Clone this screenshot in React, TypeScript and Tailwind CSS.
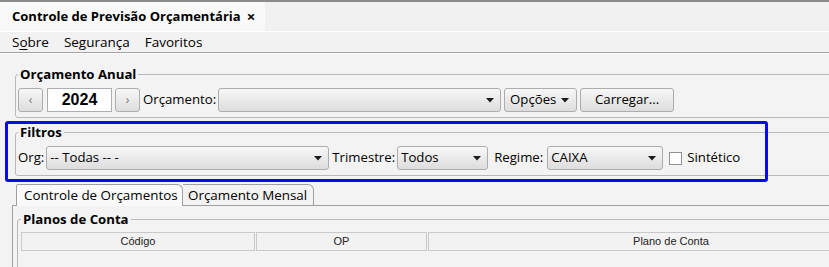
import React from 'react';

const Arrow = () => (
  <svg width="8" height="5" viewBox="0 0 8 5" className="shrink-0">
    <path d="M0 0h8L4 4.5z" fill="#1a1a1a" />
  </svg>
);

const btn =
  'h-[24px] border border-[#adadad] rounded-[3px] bg-gradient-to-b from-[#f7f7f7] to-[#dddddd] flex items-center';

const Combo = ({ w, value }: { w: string; value?: string }) => (
  <div className={`${btn} ${w} pl-[3px] pr-[6px] justify-between`}>
    <span className="leading-none">{value ?? ''}</span>
    <Arrow />
  </div>
);

const GroupBox = ({ title, className, children }: { title: string; className: string; children: React.ReactNode }) => (
  <fieldset className={`border border-[#b9b9b9] rounded-[3px] ${className}`}>
    <legend className="px-[2px] font-bold text-[13.2px] leading-[16px]">{title}</legend>
    {children}
  </fieldset>
);

export default function App() {
  return (
    <div className="relative w-[829px] h-[267px] overflow-hidden bg-[#f3f3f3] font-['Open_Sans'] text-black whitespace-nowrap">
      {/* document tab strip */}
      <div className="h-[2px] bg-[#8b8b8b]" />
      <div className="h-[29px] flex bg-[#f1f1f1]">
        <div className="w-[265px] bg-[#f9f9f9] flex items-center pl-[12px] font-bold text-[13px]">
          Controle de Previsão Orçamentária
          <span className="ml-[6px] text-[15px] leading-none">×</span>
        </div>
      </div>
      <div className="h-[21px] border-t border-white flex items-center gap-[15px] pl-[12px] text-[13.5px] bg-[#f2f2f2]">
        <span>
          S<span className="underline underline-offset-2">o</span>bre
        </span>
        <span>Segurança</span>
        <span>Favoritos</span>
      </div>
      <div className="h-px bg-[#a3a3a3]" />
      <div className="h-px bg-white" />

      {/* Orçamento Anual */}
      <GroupBox title="Orçamento Anual" className="mt-[12px] ml-[15px] -mr-[10px] px-[2px] pb-[5px]">
        <div className="mt-[6px] flex items-center text-[13.2px]">
          <div className={`${btn} w-[25px] h-[23px] justify-center text-[#777] text-[12px]`}>‹</div>
          <div className="ml-[4px] w-[65px] h-[24px] bg-white border border-[#abadb3] flex items-center justify-center font-bold text-[16px] font-['Liberation_Sans']">
            2024
          </div>
          <div className={`${btn} ml-[3px] w-[25px] h-[23px] justify-center text-[#777] text-[12px]`}>›</div>
          <span className="ml-[3px]">Orçamento:</span>
          <div className="ml-[2px]">
            <Combo w="w-[283px]" />
          </div>
          <div className={`${btn} ml-[3px] w-[73px] pl-[5px] gap-[5px]`}>
            <span>Opções</span>
            <Arrow />
          </div>
          <div className={`${btn} ml-[3px] w-[94px] justify-center`}>Carregar...</div>
        </div>
      </GroupBox>

      {/* Filtros */}
      <GroupBox title="Filtros" className="mt-[6px] ml-[15px] -mr-[10px] px-[2px] pb-[5px]">
        <div className="mt-[6px] flex items-center text-[13.2px]">
          <span>Org:</span>
          <div className="ml-[2px]">
            <Combo w="w-[283px]" value="-- Todas -- -" />
          </div>
          <span className="ml-[3px]">Trimestre:</span>
          <div className="ml-[2px]">
            <Combo w="w-[91px]" value="Todos" />
          </div>
          <span className="ml-[6px]">Regime:</span>
          <div className="ml-[4px]">
            <Combo w="w-[116px]" value="CAIXA" />
          </div>
          <div className="ml-[6px] w-[13px] h-[13px] bg-white border border-[#8f8f8f]" />
          <span className="ml-[5px]">Sintético</span>
        </div>
      </GroupBox>

      {/* tabs */}
      <div className="mt-[8px] ml-[12px]">
        <div className="flex items-end text-[13.4px] h-[22px]">
          <div className="w-[4px] h-full border-b border-[#a0a0a0]" />
          <div className="w-[167px] h-full bg-[#fafafa] border-l border-t border-r border-[#a0a0a0] rounded-tl-[2px] rounded-tr-[6px] pl-[7px] flex items-center">
            Controle de Orçamentos
          </div>
          <div className="w-[131px] h-full border-t border-r border-b border-[#a0a0a0] rounded-tr-[6px] pl-[5px] flex items-center">
            Orçamento Mensal
          </div>
          <div className="flex-1 h-full border-b border-[#a0a0a0]" />
        </div>
        <div className="border-l border-[#a0a0a0] pt-[5px] pl-[4px] h-[70px]">
          <GroupBox title="Planos de Conta" className="-mr-[20px] px-[3px] h-[80px]">
            <div className="mt-[5px] flex gap-[1px] font-['Liberation_Sans'] text-[11px] text-[#222]">
              <div className="w-[234px] h-[19px] bg-[#f2f2f2] border border-[#c9c9c9] flex items-center justify-center">Código</div>
              <div className="w-[171px] h-[19px] bg-[#f2f2f2] border border-[#c9c9c9] flex items-center justify-center">OP</div>
              <div className="w-[486px] h-[19px] bg-[#f2f2f2] border border-[#c9c9c9] flex items-center justify-center">Plano de Conta</div>
            </div>
          </GroupBox>
        </div>
      </div>

      {/* highlight annotation */}
      <div className="absolute left-[5px] top-[121px] w-[763px] h-[61px] border-[3px] border-[#0a0af0] rounded-[3px] pointer-events-none" />
    </div>
  );
}
